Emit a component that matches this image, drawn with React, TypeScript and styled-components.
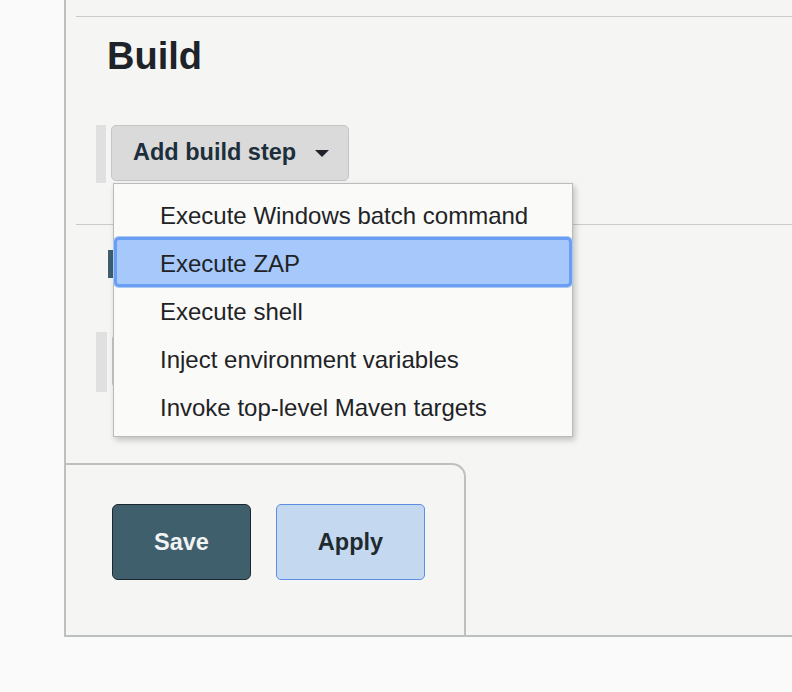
import React from "react";
import styled, { createGlobalStyle } from "styled-components";

const GlobalStyle = createGlobalStyle`
  body {
    margin: 0;
    background: #fafafa;
    font-family: "Liberation Sans", Arial, Helvetica, sans-serif;
    color: #1d2328;
  }
`;

export const Page = styled.div`
  box-sizing: border-box;
  margin-left: 64px;
  width: 728px;
  height: 637px;
  padding-top: 16px;
  border-left: 2px solid #bcc1bf;
  border-bottom: 2px solid #bcc1bf;
  background: #f5f5f3;
  display: flex;
  flex-direction: column;
`;

export const Section = styled.section`
  margin-left: 10px;
  border-top: 1px solid #cacaca;
  display: flex;
  flex-direction: column;
`;

export const Title = styled.h2`
  margin: 17px 0 0 31px;
  font-size: 38px;
  line-height: 1.2;
  font-weight: 700;
  color: #1d2328;
`;

export const StepRow = styled.div<{ $top: number }>`
  display: flex;
  align-items: flex-start;
  gap: 5px;
  margin: ${(p) => p.$top}px 0 0 20px;
`;

export const Handle = styled.div<{ $h: number; $w?: number }>`
  width: ${(p) => p.$w ?? 10}px;
  height: ${(p) => p.$h}px;
  background: #e0e0e0;
`;

export const DropWrap = styled.div`
  position: relative;
`;

export const AddButton = styled.button<{ $w: number; $h: number }>`
  box-sizing: border-box;
  width: ${(p) => p.$w}px;
  height: ${(p) => p.$h}px;
  display: flex;
  align-items: center;
  gap: 19px;
  padding: 0 0 0 21px;
  background: #dadada;
  border: 1px solid #c3c6c5;
  border-radius: 5px;
  font-family: inherit;
  font-size: 23.5px;
  font-weight: 700;
  color: #1c2f3a;
`;

export const Caret = styled.span`
  width: 0;
  height: 0;
  border-left: 7px solid transparent;
  border-right: 7px solid transparent;
  border-top: 7px solid #1d2328;
  margin-top: 2px;
`;

export const Menu = styled.ul`
  position: absolute;
  top: calc(100% + 2px);
  left: 2px;
  box-sizing: border-box;
  width: 460px;
  margin: 0;
  padding: 6px 0;
  list-style: none;
  background: #fafaf9;
  border: 1px solid #b9bcbb;
  box-shadow: 2px 3px 6px rgba(0, 0, 0, 0.22);
  z-index: 10;
`;

export const MenuItem = styled.li<{ $active?: boolean }>`
  box-sizing: border-box;
  height: 48px;
  display: flex;
  align-items: center;
  padding: 4px 0 0 ${(p) => (p.$active ? 43 : 46)}px;
  font-size: 24px;
  color: #1f2326;
  ${(p) =>
    p.$active &&
    `
    height: 50px;
    margin: -1px 0;
    background: #a6c8fb;
    border: 3px solid #6a9ef2;
    border-radius: 5px;
    box-shadow: 0 0 0 1px #a9c8f5;
  `}
`;

export const Marker = styled.div`
  margin: 25px 0 0 32px;
  width: 30px;
  height: 28px;
  background: #3e5f6e;
`;

export const Footer = styled.div`
  box-sizing: border-box;
  margin-top: auto;
  width: 400px;
  height: 172px;
  display: flex;
  align-items: flex-start;
  gap: 25px;
  padding: 39px 0 0 46px;
  border-top: 2px solid #bcc1bf;
  border-right: 2px solid #bcc1bf;
  border-top-right-radius: 14px;
  background: #f5f5f3;
`;

export const ActionButton = styled.button<{ $primary?: boolean; $w: number }>`
  box-sizing: border-box;
  width: ${(p) => p.$w}px;
  height: 76px;
  font-family: inherit;
  font-size: 23.5px;
  font-weight: 700;
  border-radius: ${(p) => (p.$primary ? 6 : 5)}px;
  background: ${(p) => (p.$primary ? "#3f5f6d" : "#c4d8ef")};
  border: 1px solid ${(p) => (p.$primary ? "#1c282e" : "#5b8fe3")};
  color: ${(p) => (p.$primary ? "#f2f4f4" : "#1e2a30")};
`;

const steps = [
  "Execute Windows batch command",
  "Execute ZAP",
  "Execute shell",
  "Inject environment variables",
  "Invoke top-level Maven targets",
];

const App: React.FC = () => {
  return (
    <>
      <GlobalStyle />
      <Page>
        <Section>
          <Title>Build</Title>
          <StepRow $top={45}>
            <Handle $h={58} />
            <DropWrap>
              <AddButton $w={238} $h={56}>
                Add build step
                <Caret />
              </AddButton>
              <Menu>
                {steps.map((s) => (
                  <MenuItem key={s} $active={s === "Execute ZAP"}>
                    {s}
                  </MenuItem>
                ))}
              </Menu>
            </DropWrap>
          </StepRow>
        </Section>

        <Section style={{ marginTop: 41 }}>
          <Marker />
          <StepRow $top={54}>
            <Handle $h={60} $w={11} />
            <AddButton $w={200} $h={54} style={{ marginTop: 2 }} />
          </StepRow>
        </Section>

        <Footer>
          <ActionButton $primary $w={139}>
            Save
          </ActionButton>
          <ActionButton $w={149}>Apply</ActionButton>
        </Footer>
      </Page>
    </>
  );
};

export default App;
